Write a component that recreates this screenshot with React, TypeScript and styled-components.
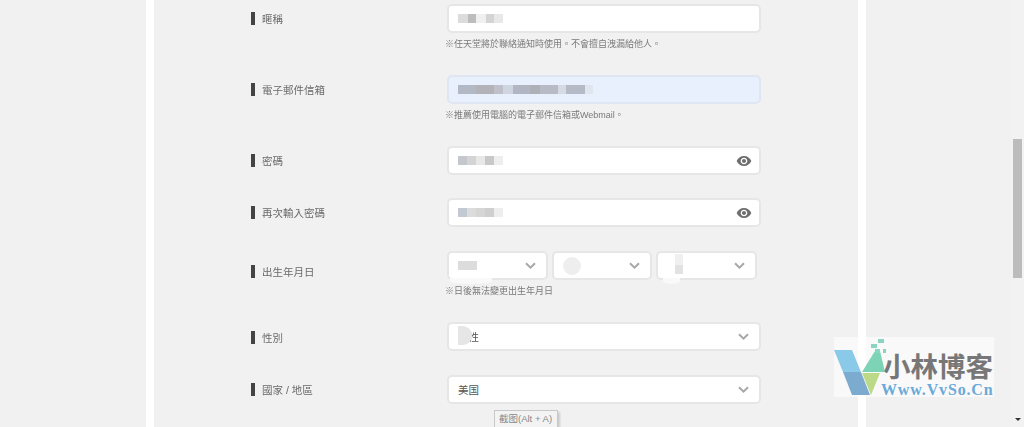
import styled, { createGlobalStyle } from 'styled-components';

const GlobalStyle = createGlobalStyle`
  html, body {
    margin: 0;
    height: 427px;
    overflow: hidden;
    background: #f1f1f1;
    font-family: "Liberation Sans", "Noto Sans CJK TC", sans-serif;
  }
`;

const Page = styled.div`
  position: relative;
  display: flex;
  width: 1024px;
  height: 427px;
  overflow: hidden;
`;

const Content = styled.div`
  flex: 1;
  padding-left: 146px;
`;

const Panel = styled.div`
  box-sizing: border-box;
  width: 720px;
  height: 427px;
  padding: 4px 0 0 97px;
  border-left: 8px solid #fff;
  border-right: 8px solid #fff;
  background: #f1f1f1;
`;

const Row = styled.div<{ $gap: number }>`
  display: grid;
  grid-template-columns: 196px 314px;
  margin-bottom: ${(p) => p.$gap}px;
`;

const Label = styled.div<{ $top?: number }>`
  display: flex;
  align-items: center;
  gap: 7px;
  height: 14px;
  margin-top: ${(p) => p.$top ?? 7}px;
  color: #6a6a6a;
  font-size: 10.5px;
  white-space: nowrap;
  filter: blur(0.25px);
  &::before {
    content: '';
    width: 4px;
    height: 13px;
    background: #444;
  }
`;

const Field = styled.div<{ $filled?: boolean; $width?: number; $top?: number }>`
  position: relative;
  box-sizing: border-box;
  display: flex;
  align-items: center;
  justify-content: space-between;
  width: ${(p) => p.$width ?? 314}px;
  height: 29px;
  margin-top: ${(p) => p.$top ?? 0}px;
  padding: 0 10px 0 9px;
  border: 2px solid ${(p) => (p.$filled ? '#dfe6f2' : '#e6e6e6')};
  border-radius: 5px;
  background: ${(p) => (p.$filled ? '#e8f0fe' : '#fff')};
  color: #555;
  font-size: 10.5px;
`;

const Hint = styled.div`
  margin: 6px 0 0 -2px;
  color: #7a7a7a;
  font-size: 9px;
  line-height: 11px;
  white-space: nowrap;
  filter: blur(0.25px);
`;

const DateRow = styled.div`
  display: flex;
  gap: 4px;
`;

const Mosaic = styled.div`
  display: flex;
  height: 9px;
  filter: blur(0.4px);
`;

const Cell = styled.span<{ $shade: string; $w: number }>`
  width: ${(p) => p.$w}px;
  background: ${(p) => p.$shade};
`;

// white paint marks that spill over the bottom edge of the date selects
const Smudge = styled.span<{ $left: number; $w: number }>`
  position: absolute;
  left: ${(p) => p.$left}px;
  bottom: -6px;
  width: ${(p) => p.$w}px;
  height: 6px;
  border-radius: 0 0 50% 50%;
  background: #f9f9f9;
`;

const DayBlot = styled.span`
  width: 18px;
  height: 18px;
  border-radius: 50%;
  background: #eeeeee;
`;

const YearBlot = styled.span`
  align-self: flex-start;
  width: 8px;
  height: 20px;
  margin-left: 8px;
  margin-top: 1px;
  background: linear-gradient(#f0f0f0 55%, #e2e2e2 55%);
`;

const GenderValue = styled.span`
  position: relative;
  filter: blur(0.25px);
  &::after {
    content: '';
    position: absolute;
    left: 0;
    top: -3px;
    width: 14px;
    height: 19px;
    border-radius: 0 9px 9px 0;
    background: #e6e6e6;
  }
`;

const EyeIcon = styled.svg`
  width: 16px;
  height: 16px;
  fill: #6e6e6e;
  margin-right: -3px;
`;

const Chevron = styled.svg`
  width: 11px;
  height: 11px;
  fill: none;
  stroke: #a8a8a8;
  stroke-width: 2;
`;

const ScrollTrack = styled.div`
  position: relative;
  box-sizing: border-box;
  width: 12px;
  padding: 139px 2px 0 1px;
  background: #f2f2f2;
`;

const ScrollThumb = styled.div`
  height: 139px;
  background: #bcbcbc;
`;

const ScrollArrow = styled.div`
  position: absolute;
  left: 3px;
  bottom: 6px;
  border-left: 3px solid transparent;
  border-right: 3px solid transparent;
  border-top: 3px solid #333;
`;

const Tooltip = styled.div`
  position: absolute;
  left: 494px;
  top: 410px;
  box-sizing: border-box;
  width: 64px;
  height: 18px;
  padding-left: 4px;
  border: 1px solid #c8c8c8;
  background: #f3f3f3;
  box-shadow: 2px 2px 2px #ccc;
  color: #888;
  font-size: 9.5px;
  line-height: 15px;
  white-space: nowrap;
`;

const Watermark = styled.div`
  position: absolute;
  left: 834px;
  top: 337px;
  display: flex;
  width: 160px;
  height: 60px;
  background: rgba(255, 255, 255, 0.55);
`;

const LogoMark = styled.svg`
  flex: none;
  width: 52px;
  height: 60px;
  opacity: 0.9;
`;

const Brand = styled.div`
  margin-left: -3px;
  padding-top: 15px;
`;

const BrandName = styled.div`
  height: 31px;
  color: #777;
  font-family: "Noto Sans CJK TC", sans-serif;
  font-size: 27.5px;
  font-weight: 700;
  line-height: 27px;
  white-space: nowrap;
`;

const BrandUrl = styled.div`
  margin-left: -2px;
  color: #6aa9d8;
  font-family: "Liberation Serif", serif;
  font-size: 16px;
  font-weight: 700;
  letter-spacing: 0.85px;
  line-height: 14px;
  white-space: nowrap;
`;

type Block = [string, number];

const blur = (blocks: Block[]) => (
  <Mosaic>
    {blocks.map(([shade, w], i) => (
      <Cell key={i} $shade={shade} $w={w} />
    ))}
  </Mosaic>
);

const Eye = () => (
  <EyeIcon viewBox="0 0 24 24">
    <path d="M12 4.5C7 4.5 2.73 7.61 1 12c1.73 4.39 6 7.5 11 7.5s9.27-3.11 11-7.5c-1.73-4.39-6-7.5-11-7.5zM12 17c-2.76 0-5-2.24-5-5s2.24-5 5-5 5 2.24 5 5-2.24 5-5 5zm0-8c-1.66 0-3 1.34-3 3s1.34 3 3 3 3-1.34 3-3-1.34-3-3-3z" />
  </EyeIcon>
);

const Down = () => (
  <Chevron viewBox="0 0 11 11">
    <path d="M1 3.2 5.5 7.7 10 3.2" />
  </Chevron>
);

function App() {
  return (
    <Page>
      <GlobalStyle />
      <Content>
        <Panel>
          <Row $gap={0}>
            <Label>暱稱</Label>
            <div>
              <Field>{blur([['#dcdcdc', 10], ['#bdbdbd', 8], ['#f0f0f0', 10], ['#d4d4d4', 8], ['#e8e8e8', 9]])}</Field>
              <Hint>※任天堂將於聯絡通知時使用。不會擅自洩漏給他人。</Hint>
            </div>
          </Row>
          <Row $gap={0}>
            <Label $top={32}>電子郵件信箱</Label>
            <div>
              <Field $filled $top={25}>
                {blur([
                  ['#b2b8c4', 18],
                  ['#b3b2b8', 18],
                  ['#bfc0c9', 9],
                  ['#d0d5e2', 10],
                  ['#b2b6c2', 17],
                  ['#aeb0b8', 10],
                  ['#b8bbc6', 18],
                  ['#d6dae2', 8],
                  ['#b4bac6', 19],
                  ['#dfe6ee', 8],
                ])}
              </Field>
              <Hint>※推薦使用電腦的電子郵件信箱或Webmail。</Hint>
            </div>
          </Row>
          <Row $gap={23}>
            <Label $top={32}>密碼</Label>
            <Field $top={25}>
              {blur([['#c4c7cc', 9], ['#d4d4d4', 9], ['#e8e8e8', 9], ['#c8c8c8', 9], ['#eeeeee', 9]])}
              <Eye />
            </Field>
          </Row>
          <Row $gap={24}>
            <Label>再次輸入密碼</Label>
            <Field>
              {blur([['#c3c9d3', 9], ['#dcdcdc', 9], ['#d6d6d6', 9], ['#cfcfcf', 9], ['#eeeeee', 9]])}
              <Eye />
            </Field>
          </Row>
          <Row $gap={0}>
            <Label $top={13}>出生年月日</Label>
            <div>
              <DateRow>
                <Field $width={100.5}>
                  {blur([['#dcdcdc', 19]])}
                  <Down />
                  <Smudge $left={1} $w={42} />
                </Field>
                <Field $width={100.5}>
                  <DayBlot />
                  <Down />
                </Field>
                <Field $width={100.5}>
                  <YearBlot />
                  <Down />
                  <Smudge $left={5} $w={17} />
                </Field>
              </DateRow>
              <Hint>※日後無法變更出生年月日</Hint>
            </div>
          </Row>
          <Row $gap={24}>
            <Label $top={33}>性別</Label>
            <Field $top={25}>
              <GenderValue>女性</GenderValue>
              <Down />
            </Field>
          </Row>
          <Row $gap={0}>
            <Label>國家 / 地區</Label>
            <Field>
              美国
              <Down />
            </Field>
          </Row>
        </Panel>
      </Content>
      <ScrollTrack>
        <ScrollThumb />
        <ScrollArrow />
      </ScrollTrack>
      <Tooltip>截图(Alt + A)</Tooltip>
      <Watermark>
        <LogoMark viewBox="0 0 52 60">
          <polygon points="0,13 18,13 27,35 9,35" fill="#7fc4e6" />
          <polygon points="9,35 27,35 36,58 18,58" fill="#6fa3cc" />
          <polygon points="28,35 41,14 46,14 51,35" fill="#6fcfae" />
          <polygon points="28,36 46,36 37,58" fill="#b5d67a" />
          <rect x="37" y="7" width="6" height="4" fill="#7fd2bd" />
          <rect x="44" y="2" width="6" height="4" fill="#7fd2bd" />
          <rect x="41" y="12" width="5" height="4" fill="#7fd2bd" />
          <rect x="49" y="12" width="6" height="4" fill="#7fd2bd" />
        </LogoMark>
        <Brand>
          <BrandName>小林博客</BrandName>
          <BrandUrl>Www.VvSo.Cn</BrandUrl>
        </Brand>
      </Watermark>
    </Page>
  );
}

export default App;
